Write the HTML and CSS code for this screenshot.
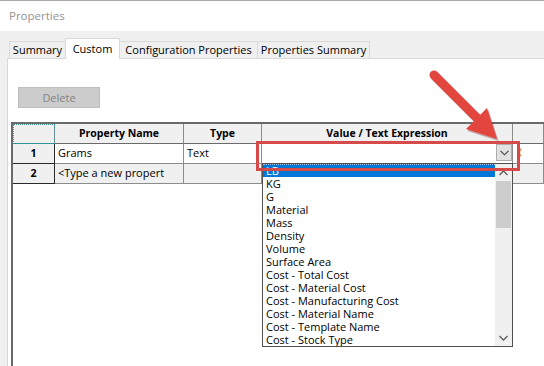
FILE: index.html
```html
<!DOCTYPE html>
<html>
<head>
<meta charset="utf-8">
<title>Properties</title>
<link rel="stylesheet" href="styles.css">
</head>
<body>
<div class="window">
  <div class="titlebar">Properties</div>
  <div class="tabs">
    <div class="tab t-summary">Summary</div>
    <div class="tab active t-custom">Custom</div>
    <div class="tab t-config">Configuration Properties</div>
    <div class="tab t-psum">Properties Summary</div>
  </div>
  <div class="panel">
    <div class="btn-delete">Delete</div>
    <div class="grid">
      <div class="row head">
        <div class="cell c0 corner"></div>
        <div class="cell c1">Property Name</div>
        <div class="cell c2">Type</div>
        <div class="cell c3">Value / Text Expression</div>
        <div class="cell c4"></div>
      </div>
      <div class="row r1">
        <div class="cell c0">1</div>
        <div class="cell c1">Grams</div>
        <div class="cell c2">Text</div>
        <div class="cell c3 combo-cell">
          <div class="combo-btn">
            <svg width="9" height="6" viewBox="0 0 9 6"><path d="M0.5 0.8 L4.5 4.8 L8.5 0.8" fill="none" stroke="#404040" stroke-width="1.1"/></svg>
          </div>
        </div>
        <div class="cell c4">
          <svg class="mark" width="5" height="9" viewBox="0 0 5 9"><path d="M3.5 0.8 C1 1.5 1 7.5 3.5 8.2" fill="none" stroke="#c98a45" stroke-width="1.2"/></svg>
        </div>
      </div>
      <div class="row r2">
        <div class="cell c0">2</div>
        <div class="cell c1">&lt;Type a new propert</div>
        <div class="cell c2"></div>
        <div class="cell c3"></div>
        <div class="cell c4"></div>
      </div>
      <div class="dropdown">
        <div class="list">
          <div class="item sel">LB</div>
          <div class="item">KG</div>
          <div class="item">G</div>
          <div class="item">Material</div>
          <div class="item">Mass</div>
          <div class="item">Density</div>
          <div class="item">Volume</div>
          <div class="item">Surface Area</div>
          <div class="item">Cost - Total Cost</div>
          <div class="item">Cost - Material Cost</div>
          <div class="item">Cost - Manufacturing Cost</div>
          <div class="item">Cost - Material Name</div>
          <div class="item">Cost - Template Name</div>
          <div class="item">Cost - Stock Type</div>
        </div>
        <div class="scrollbar">
          <div class="sb-btn">
            <svg width="9" height="6" viewBox="0 0 9 6"><path d="M0.5 5 L4.5 1 L8.5 5" fill="none" stroke="#606060" stroke-width="1.4"/></svg>
          </div>
          <div class="sb-thumb"></div>
          <div class="sb-track"></div>
          <div class="sb-btn">
            <svg width="9" height="6" viewBox="0 0 9 6"><path d="M0.5 1 L4.5 5 L8.5 1" fill="none" stroke="#606060" stroke-width="1.4"/></svg>
          </div>
        </div>
      </div>
    </div>
  </div>
</div>
<div class="annot-rect"></div>
<svg class="annot-arrow" width="544" height="366" viewBox="0 0 544 366">
  <g class="arrow-shadow" transform="translate(1.5 2)">
    <line x1="434" y1="75" x2="478" y2="119" stroke-width="9" stroke-linecap="round"/>
    <polygon points="466,129 487,108 497,139"/>
  </g>
  <g class="arrow-body">
    <line x1="434" y1="75" x2="478" y2="119" stroke-width="9" stroke-linecap="round"/>
    <polygon points="466,129 487,108 497,139"/>
  </g>
</svg>
</body>
</html>
```
FILE: styles.css
```css
* { box-sizing: border-box; }
html, body { margin: 0; padding: 0; }
body {
  width: 544px;
  height: 366px;
  overflow: hidden;
  position: relative;
  background: #f0f0f0;
  font-family: "Open Sans", "Noto Sans", sans-serif;
  font-size: 11px;
  color: #000;
}
.window {
  display: flex;
  flex-direction: column;
  height: 366px;
}
.titlebar {
  flex: none;
  height: 31px;
  background: #fff;
  border-top: 1px solid #a8a8a8;
  padding-left: 9px;
  line-height: 30px;
  color: #949494;
  font-size: 11.5px;
}
.tabs {
  flex: none;
  height: 27px;
  display: flex;
  align-items: flex-end;
  padding-left: 9px;
}
.tab {
  height: 17px;
  border: 1px solid #d9d9d9;
  border-bottom: none;
  background: #f0f0f0;
  text-align: center;
  line-height: 16px;
  margin-right: -1px;
  white-space: nowrap;
}
.tab.active {
  height: 21px;
  line-height: 19px;
  background: #fff;
  margin-bottom: -1px;
  position: relative;
  z-index: 1;
}
.t-summary { width: 57px; }
.t-custom { width: 55px; }
.t-config { width: 139px; }
.t-psum { width: 113px; }
.panel {
  flex: 1;
  margin-left: 7px;
  border-top: 1px solid #d9d9d9;
  border-left: 1px solid #d9d9d9;
  background: #fff;
  display: flex;
  flex-direction: column;
  min-height: 0;
}
.btn-delete {
  align-self: flex-start;
  margin: 28px 0 0 10px;
  width: 82px;
  height: 21px;
  background: #cccccc;
  border: 1px solid #bfbfbf;
  color: #838383;
  text-align: center;
  line-height: 19px;
}
.grid {
  flex: 1;
  margin: 14px 0 0 3px;
  border-top: 2px solid #6a6a6a;
  border-left: 2px solid #6a6a6a;
  background: #fff;
  position: relative;
}
.row {
  display: flex;
  height: 20px;
}
.cell {
  flex: none;
  height: 20px;
  border-right: 1px solid #8c8c8c;
  border-bottom: 1px solid #8c8c8c;
  padding: 0 3px;
  line-height: 18px;
  white-space: nowrap;
  overflow: hidden;
}
.c0 { width: 42px; text-align: center; font-weight: bold; background: #f0f0f0; font-size: 10.5px; }
.c1 { width: 129px; }
.c2 { width: 78px; }
.c3 { width: 251px; }
.c4 { flex: 1; }
.head .cell {
  background: #f0f0f0;
  font-weight: bold;
  font-size: 10.5px;
  text-align: center;
  border-bottom-color: #6a6a6a;
}
.r1 .c0, .r2 .c0 {
  border-right-color: #2a2a2a;
  border-bottom-color: #2a2a2a;
}
.r2 .cell { background: #f0f0f0; }
.corner {
  outline: 1px dotted #3a9e9e;
  outline-offset: -1px;
}
.combo-cell {
  padding: 0;
  display: flex;
  justify-content: flex-end;
  align-items: flex-start;
}
.combo-btn {
  width: 16px;
  height: 17px;
  border: 1px solid #adadad;
  background: #e1e1e1;
  display: flex;
  align-items: center;
  justify-content: center;
}
.mark {
  display: block;
  margin: 4px 0 0 2px;
}
.dropdown {
  position: absolute;
  left: 249px;
  top: 39px;
  width: 251px;
  height: 184px;
  border: 1px solid #505050;
  background: #fff;
  display: flex;
  z-index: 2;
}
.list {
  flex: 1;
  overflow: hidden;
}
.item {
  height: 13px;
  line-height: 13px;
  padding-left: 3px;
  white-space: nowrap;
}
.item.sel {
  background: #0078d7;
  color: #fff;
  border-top: 1px dotted #9cc4ec;
  line-height: 12px;
}
.scrollbar {
  flex: none;
  width: 17px;
  background: #f0f0f0;
  display: flex;
  flex-direction: column;
}
.sb-btn {
  flex: none;
  height: 17px;
  display: flex;
  align-items: center;
  justify-content: center;
}
.sb-thumb {
  flex: none;
  height: 47px;
  margin: 0 1px;
  background: #cdcdcd;
}
.sb-track { flex: 1; }
.annot-rect {
  position: absolute;
  left: 256px;
  top: 141px;
  width: 264px;
  height: 30px;
  border: 3px solid #d74a4a;
  z-index: 5;
}
.annot-arrow {
  position: absolute;
  left: 0;
  top: 0;
  z-index: 6;
  pointer-events: none;
}
.arrow-shadow line { stroke: rgba(110, 20, 20, 0.35); }
.arrow-shadow polygon { fill: rgba(110, 20, 20, 0.35); }
.arrow-body line { stroke: #e2463f; }
.arrow-body polygon { fill: #e2463f; }
```
